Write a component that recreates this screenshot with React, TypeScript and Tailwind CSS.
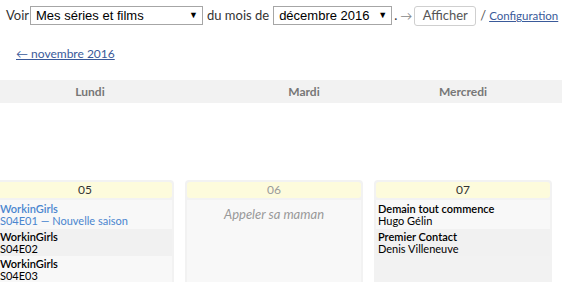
import React from "react";

type Entry = { title: string; sub: string; blue?: boolean };

function Select({ label, width }: { label: string; width: string }) {
  return (
    <div
      className={`${width} h-[19px] shrink-0 border border-[#a6a6a6] bg-white flex items-center justify-between pl-[5px] pr-[4px] font-['Liberation_Sans',sans-serif] text-[13px] text-black leading-none whitespace-nowrap`}
    >
      <span>{label}</span>
      <span className="text-[9px]">▼</span>
    </div>
  );
}

function Card({
  day,
  entries,
  note,
  muted,
}: {
  day: string;
  entries?: Entry[];
  note?: string;
  muted?: boolean;
}) {
  return (
    <div className="w-[178px] h-[110px] shrink-0 bg-[#f2f2f2] rounded-[4px] p-[2px] pb-0 flex flex-col">
      <div
        className={`h-[16px] rounded-[3px] bg-[#fdfbdc] text-center text-[12px] leading-[16px] ${
          muted ? "text-[#9a9a9a]" : "text-[#333]"
        }`}
      >
        {day}
      </div>
      {note && (
        <div className="flex-1 mt-[2px] bg-[#f8f8f8] text-center italic text-[13px] text-[#999] pt-[5px]">
          {note}
        </div>
      )}
      {entries && (
        <div className="flex-1 mt-[2px] flex flex-col">
          {entries.map((e, i) => (
            <div
              key={i}
              className={`px-[2px] ${i === 0 ? "pt-[3px] pb-[2px]" : "pt-[2px] pb-[1px]"} text-[11px] leading-[12px] whitespace-nowrap ${
                i % 2 === 0 ? "bg-[#f8f8f8]" : "bg-[#f1f1f1]"
              } ${e.blue ? "text-[#4a86cf]" : "text-black"}`}
            >
              <div className="font-semibold">{e.title}</div>
              <div>{e.sub}</div>
            </div>
          ))}
        </div>
      )}
    </div>
  );
}

export default function App() {
  return (
    <div className="w-[562px] h-[282px] overflow-hidden bg-white font-['Lato',sans-serif] text-[13px] text-[#333]">
      <div className="flex items-center h-[30px] pt-[1px] pl-[6px] whitespace-nowrap">
        <span className="w-[24px] shrink-0">Voir</span>
        <Select label="Mes séries et films" width="w-[173px]" />
        <span className="ml-[4px]">du mois de</span>
        <div className="ml-[4px]">
          <Select label="décembre 2016" width="w-[119px]" />
        </div>
        <span className="ml-[2px]">.</span>
        <span className="ml-[3px] text-[#888] text-[12px]">→</span>
        <button className="ml-[2px] h-[20px] w-[62px] shrink-0 border border-[#cfcfcf] rounded-[3px] bg-white text-[#555] text-[13px] leading-none">
          Afficher
        </button>
        <span className="ml-[4px] text-[#555]">/</span>
        <a className="text-[#3a5a9a] underline ml-[3px] text-[11.5px]" href="#">
          Configuration
        </a>
      </div>
      <div className="pl-[16px] pt-[14px] h-[50px]">
        <a className="text-[#3a5a9a] underline text-[12px]" href="#">
          ← novembre 2016
        </a>
      </div>
      <div className="h-[23px] bg-[#f2f2f2] flex items-center font-bold text-[12px] text-[#777]">
        <div className="w-[180px] text-center">Lundi</div>
        <div className="w-[248px] text-center">Mardi</div>
        <div className="w-[70px] text-center">Mercredi</div>
      </div>
      <div className="h-[77px]" />
      <div className="flex gap-[11px] -ml-[4px]">
        <Card
          day="05"
          entries={[
            { title: "WorkinGirls", sub: "S04E01 — Nouvelle saison", blue: true },
            { title: "WorkinGirls", sub: "S04E02" },
            { title: "WorkinGirls", sub: "S04E03" },
          ]}
        />
        <Card day="06" note="Appeler sa maman" muted />
        <Card
          day="07"
          entries={[
            { title: "Demain tout commence", sub: "Hugo Gélin" },
            { title: "Premier Contact", sub: "Denis Villeneuve" },
          ]}
        />
      </div>
    </div>
  );
}
